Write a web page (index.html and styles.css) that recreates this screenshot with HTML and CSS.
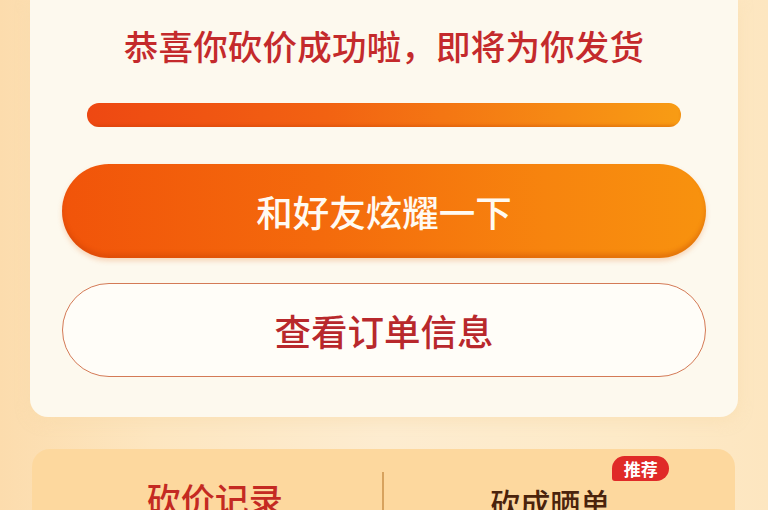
FILE: index.html
```html
<!DOCTYPE html>
<html lang="zh-CN">
<head>
<meta charset="utf-8">
<title>砍价成功</title>
<link rel="stylesheet" href="styles.css">
</head>
<body>
<div class="page">
  <section class="card">
    <h1 class="title">恭喜你砍价成功啦，即将为你发货</h1>
    <div class="progress"><div class="progress-fill"></div></div>
    <button class="btn btn-primary">和好友炫耀一下</button>
    <button class="btn btn-outline">查看订单信息</button>
  </section>
  <section class="tabs-card">
    <div class="tabs">
      <div class="tab tab-active"><span class="tab-label">砍价记录</span></div>
      <div class="tab-divider"></div>
      <div class="tab tab-second"><span class="tab-label">砍成晒单<span class="badge">推荐</span></span></div>
    </div>
  </section>
</div>
</body>
</html>
```

FILE: styles.css
```css
* { box-sizing: border-box; }
html, body { margin: 0; padding: 0; }
body {
  width: 768px;
  height: 510px;
  overflow: hidden;
  font-family: "Noto Sans CJK SC", "Noto Sans", sans-serif;
  background: linear-gradient(90deg, #fcdcad 0%, #fde6c0 20%, #fdecd0 50%, #fdeac8 80%, #fde6c0 100%);
}
.page {
  padding: 0 30px;
  display: flex;
  flex-direction: column;
}
.card {
  background: #fdf9ee;
  border-radius: 0 0 18px 18px;
  padding: 27px 32px 40px;
  display: flex;
  flex-direction: column;
  align-items: center;
  box-shadow: 0 4px 14px rgba(250, 220, 170, 0.5);
}
.title {
  margin: 0;
  font-size: 34.5px;
  line-height: 36px;
  font-weight: 500;
  color: #c42a2c;
  letter-spacing: 0.2px;
  white-space: nowrap;
}
.progress {
  margin-top: 40px;
  width: 594px;
  height: 24px;
  border-radius: 12px;
  overflow: hidden;
  background: #f6c590;
}
.progress-fill {
  width: 100%;
  height: 100%;
  background: linear-gradient(90deg, #ee4812 0%, #f26212 40%, #f68a14 80%, #f89c14 100%);
  box-shadow: inset 0 -2px 3px rgba(190, 60, 0, 0.3);
}
.btn {
  display: flex;
  align-items: center;
  justify-content: center;
  width: 644px;
  height: 94px;
  border-radius: 47px;
  font-family: inherit;
  font-size: 36.5px;
  font-weight: 500;
  padding: 0;
  cursor: pointer;
}
.btn-primary {
  margin-top: 37px;
  border: none;
  color: #fffaf2;
  background: linear-gradient(90deg, #f1540a 0%, #f46a0c 40%, #f7840e 75%, #f8920e 100%);
  box-shadow: inset 0 -4px 4px rgba(180, 50, 0, 0.28), 0 3px 5px rgba(230, 110, 30, 0.25);
}
.btn-outline {
  margin-top: 25px;
  border: 1.5px solid #d47a56;
  color: #b8282c;
  background: #fffdf8;
}
.tabs-card {
  margin: 32px 3px 0 2px;
  height: 61px;
  background: #fdd89e;
  border-radius: 18px 18px 0 0;
  padding-top: 23px;
  overflow: visible;
}
.tabs {
  display: flex;
  align-items: flex-start;
}
.tab {
  flex: 1;
  display: flex;
  justify-content: center;
  padding-top: 7px;
  font-weight: 500;
}
.tab-active {
  padding-left: 16px;
  font-size: 34px;
  line-height: 40px;
  color: #c42a22;
}
.tab-second {
  padding-right: 18px;
  padding-top: 10px;
  font-size: 30px;
  line-height: 40px;
  color: #4a230c;
}
.tab-label {
  position: relative;
  white-space: nowrap;
}
.tab-divider {
  width: 2px;
  height: 60px;
  background: #d7a25e;
}
.badge {
  position: absolute;
  left: 100%;
  top: -26px;
  margin-left: 2px;
  width: 57px;
  height: 25px;
  border-radius: 13px 13px 13px 3px;
  background: #e02a28;
  color: #ffffff;
  font-size: 17px;
  line-height: 25px;
  font-weight: 700;
  text-align: center;
}
```
